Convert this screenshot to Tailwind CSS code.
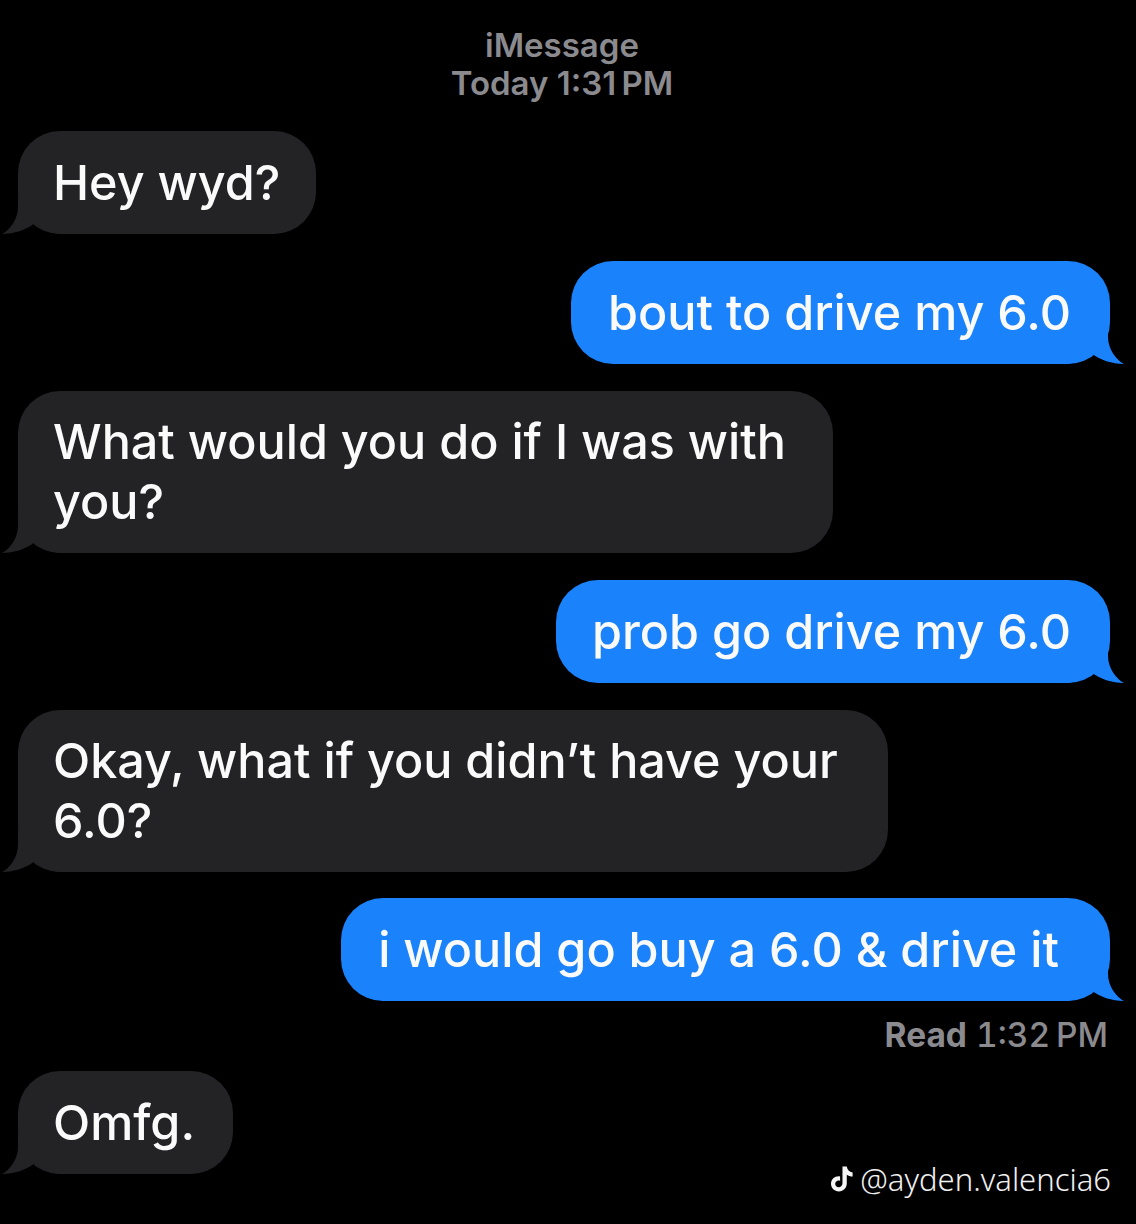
<!DOCTYPE html>
<html><head><meta charset="utf-8"><script src="https://cdn.jsdelivr.net/npm/@tailwindcss/browser@4"></script></head>
<body class="bg-black">
<div class="relative w-[1136px] h-[1224px] bg-black overflow-hidden font-['Inter','Liberation_Sans',sans-serif] text-[#fafafa] font-[550]">
  <div class="pt-[26px] pr-[12px] flex flex-col items-center text-[33px] leading-[38px] text-[#8b8b8f] font-semibold">
    <div>iMessage</div>
    <div>Today 1:31&#8201;PM</div>
  </div>
  <div class="flex flex-col pl-[18px] pr-[26px] pt-[29px] text-[48.5px] leading-[60px]">
    <div class="relative self-start bg-[#232326] rounded-[42px] pl-[36px] pr-[36px] py-[21.5px]"><span class="relative z-10 ml-[-1px]">Hey wyd?</span>
      <svg class="absolute left-[-16px] bottom-0" width="60" height="40" viewBox="0 0 60 40"><path d="M16 0V13C16 25 8 36 0 40C12 40 24 36 33 29C38 34 48 40 60 40V0Z" fill="#232326"/></svg>
    </div>
    <div class="relative self-end mt-[27px] bg-[#1a82fb] rounded-[42px] pl-[37px] pr-[39px] py-[21.5px]"><span class="relative z-10">bout to drive my 6.0</span>
      <svg class="absolute right-[-14px] bottom-0" width="60" height="40" viewBox="0 0 60 40"><path d="M44 0V13C44 25 52 36 60 40C48 40 36 36 27 29C22 34 12 40 0 40V0Z" fill="#1a82fb"/></svg>
    </div>
    <div class="relative self-start mt-[27px] w-[815px] bg-[#232326] rounded-[42px] pl-[35px] pr-9 py-[21px]"><span class="relative z-10">What would you do if I was with you?</span>
      <svg class="absolute left-[-16px] bottom-0" width="60" height="40" viewBox="0 0 60 40"><path d="M16 0V13C16 25 8 36 0 40C12 40 24 36 33 29C38 34 48 40 60 40V0Z" fill="#232326"/></svg>
    </div>
    <div class="relative self-end mt-[27px] bg-[#1a82fb] rounded-[42px] pl-9 pr-[39px] py-[21.5px]"><span class="relative z-10">prob go drive my 6.0</span>
      <svg class="absolute right-[-14px] bottom-0" width="60" height="40" viewBox="0 0 60 40"><path d="M44 0V13C44 25 52 36 60 40C48 40 36 36 27 29C22 34 12 40 0 40V0Z" fill="#1a82fb"/></svg>
    </div>
    <div class="relative self-start mt-[27px] w-[870px] bg-[#232326] rounded-[42px] pl-[35px] pr-9 py-[21px]"><span class="relative z-10">Okay, what if you didn’t have your 6.0?</span>
      <svg class="absolute left-[-16px] bottom-0" width="60" height="40" viewBox="0 0 60 40"><path d="M16 0V13C16 25 8 36 0 40C12 40 24 36 33 29C38 34 48 40 60 40V0Z" fill="#232326"/></svg>
    </div>
    <div class="relative self-end mt-[26px] bg-[#1a82fb] rounded-[42px] pl-[37px] pr-[51px] py-[21.5px]"><span class="relative z-10">i would go buy a 6.0 &amp; drive it</span>
      <svg class="absolute right-[-14px] bottom-0" width="60" height="40" viewBox="0 0 60 40"><path d="M44 0V13C44 25 52 36 60 40C48 40 36 36 27 29C22 34 12 40 0 40V0Z" fill="#1a82fb"/></svg>
    </div>
    <div class="self-end mt-[14px] text-[33.5px] leading-[40px] text-[#8b8b8f] pr-[2px] tabular-nums"><span class="font-bold">Read</span> 1:32&#8201;PM</div>
    <div class="relative self-start mt-[16px] bg-[#232326] rounded-[42px] pl-[35px] pr-[38px] py-[21.5px]"><span class="relative z-10">Omfg.</span>
      <svg class="absolute left-[-16px] bottom-0" width="60" height="40" viewBox="0 0 60 40"><path d="M16 0V13C16 25 8 36 0 40C12 40 24 36 33 29C38 34 48 40 60 40V0Z" fill="#232326"/></svg>
    </div>
  </div>
  <div class="absolute right-[25px] top-[1159px] flex items-center gap-[7px] text-[31px] leading-[40px] font-light text-[#f0f0f0] font-['Noto_Sans',sans-serif]">
    <svg width="22" height="26" viewBox="0 0 23 26"><path d="M12 0H16.5C17 3.6 19 5.8 22.6 6.2V10.5C20 10.4 18.2 9.7 16.5 8.5V17.5C16.5 22.5 13 26 8.2 26C3.5 26 0 22.5 0 18C0 13 4.4 9.5 9.5 10.3V14.8C6.8 14 4.4 15.6 4.4 18C4.4 20.2 6 21.7 8 21.7C10.3 21.7 12 20.1 12 17.3Z" fill="#f5f5f5"/></svg>
    <span>@ayden.valencia6</span>
  </div>
</div>
</body></html>
